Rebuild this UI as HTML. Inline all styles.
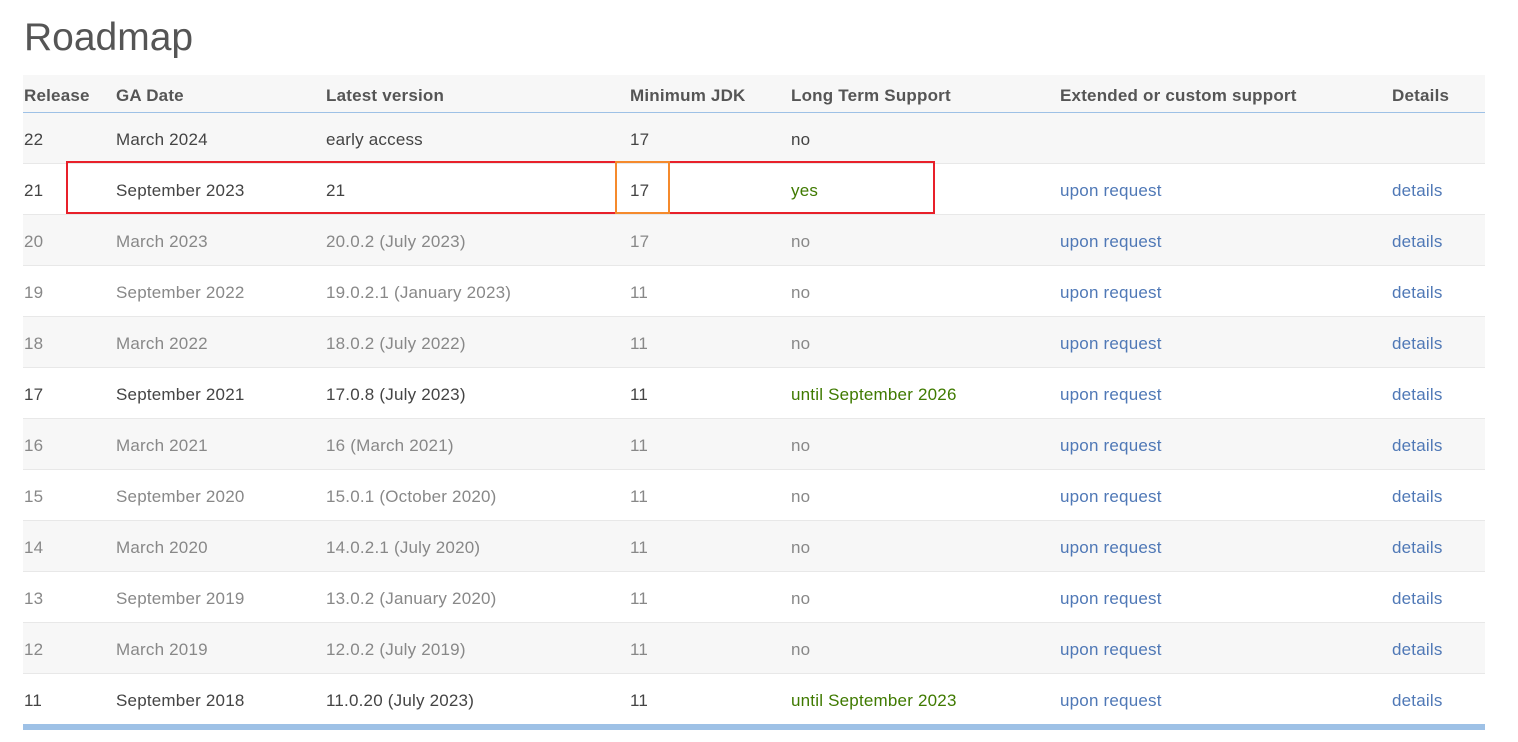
<!DOCTYPE html>
<html><head><style>
body{margin:0;background:#fff;font-family:"Liberation Sans",sans-serif;}
h1{position:absolute;left:24px;top:16px;margin:0;font-weight:normal;font-size:39px;color:#555;letter-spacing:0}
.t{position:absolute;left:23px;top:75px;width:1462px}
.r{position:relative;height:51px;border-bottom:1px solid #e8e8e8;box-sizing:border-box;font-size:17px;color:#444;letter-spacing:0.2px}
.r span{position:absolute;top:50%;transform:translateY(-40%);white-space:nowrap}
.h{height:38px;background:#f7f7f7;border-bottom:1px solid #9ec1e6;font-weight:bold;color:#555}
.g{background:#f7f7f7}
.o{color:#888}
.gr{color:#3f7a00}
.b{color:#4f78b6}
.c1{left:1px}.c2{left:93px}.c3{left:303px}.c4{left:607px}.c5{left:768px}.c6{left:1037px}.c7{left:1369px}
.bar{position:absolute;left:23px;top:724px;width:1462px;height:6px;background:#9ec1e6}
.box{position:absolute;box-sizing:border-box}
</style></head><body>
<h1>Roadmap</h1>
<div class="t">
<div class="r h"><span class="c1">Release</span><span class="c2">GA Date</span><span class="c3">Latest version</span><span class="c4">Minimum JDK</span><span class="c5">Long Term Support</span><span class="c6">Extended or custom support</span><span class="c7">Details</span></div>
<div class="r g"><span class="c1">22</span><span class="c2">March 2024</span><span class="c3">early access</span><span class="c4">17</span><span class="c5">no</span></div>
<div class="r"><span class="c1">21</span><span class="c2">September 2023</span><span class="c3">21</span><span class="c4">17</span><span class="c5 gr">yes</span><span class="c6 b">upon request</span><span class="c7 b">details</span></div>
<div class="r g o"><span class="c1">20</span><span class="c2">March 2023</span><span class="c3">20.0.2 (July 2023)</span><span class="c4">17</span><span class="c5">no</span><span class="c6 b">upon request</span><span class="c7 b">details</span></div>
<div class="r o"><span class="c1">19</span><span class="c2">September 2022</span><span class="c3">19.0.2.1 (January 2023)</span><span class="c4">11</span><span class="c5">no</span><span class="c6 b">upon request</span><span class="c7 b">details</span></div>
<div class="r g o"><span class="c1">18</span><span class="c2">March 2022</span><span class="c3">18.0.2 (July 2022)</span><span class="c4">11</span><span class="c5">no</span><span class="c6 b">upon request</span><span class="c7 b">details</span></div>
<div class="r"><span class="c1">17</span><span class="c2">September 2021</span><span class="c3">17.0.8 (July 2023)</span><span class="c4">11</span><span class="c5 gr">until September 2026</span><span class="c6 b">upon request</span><span class="c7 b">details</span></div>
<div class="r g o"><span class="c1">16</span><span class="c2">March 2021</span><span class="c3">16 (March 2021)</span><span class="c4">11</span><span class="c5">no</span><span class="c6 b">upon request</span><span class="c7 b">details</span></div>
<div class="r o"><span class="c1">15</span><span class="c2">September 2020</span><span class="c3">15.0.1 (October 2020)</span><span class="c4">11</span><span class="c5">no</span><span class="c6 b">upon request</span><span class="c7 b">details</span></div>
<div class="r g o"><span class="c1">14</span><span class="c2">March 2020</span><span class="c3">14.0.2.1 (July 2020)</span><span class="c4">11</span><span class="c5">no</span><span class="c6 b">upon request</span><span class="c7 b">details</span></div>
<div class="r o"><span class="c1">13</span><span class="c2">September 2019</span><span class="c3">13.0.2 (January 2020)</span><span class="c4">11</span><span class="c5">no</span><span class="c6 b">upon request</span><span class="c7 b">details</span></div>
<div class="r g o"><span class="c1">12</span><span class="c2">March 2019</span><span class="c3">12.0.2 (July 2019)</span><span class="c4">11</span><span class="c5">no</span><span class="c6 b">upon request</span><span class="c7 b">details</span></div>
<div class="r"><span class="c1">11</span><span class="c2">September 2018</span><span class="c3">11.0.20 (July 2023)</span><span class="c4">11</span><span class="c5 gr">until September 2023</span><span class="c6 b">upon request</span><span class="c7 b">details</span></div>
</div>
<div class="bar"></div>
<div class="box" style="left:66px;top:161px;width:869px;height:53px;border:2px solid #e8202a"></div>
<div class="box" style="left:615px;top:161px;width:55px;height:53px;border:2px solid #f58a2c"></div>
</body></html>
